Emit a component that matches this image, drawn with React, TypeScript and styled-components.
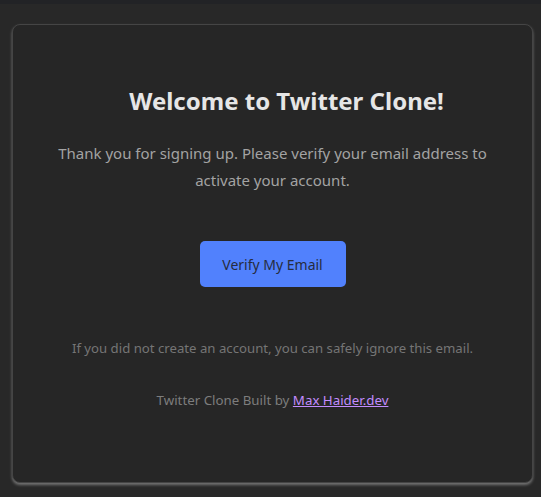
import React from "react";
import styled, { createGlobalStyle } from "styled-components";

const Global = createGlobalStyle`
  html, body { margin: 0; padding: 0; background: #282828; }
  body { font-family: "Noto Sans", "Open Sans", sans-serif; }
`;

const Page = styled.div`
  min-height: 497px;
  box-sizing: border-box;
  border-top: 4px solid #222326;
  padding: 20px 8px 14px 12px;
  background: #282828;
`;

const Card = styled.div`
  box-sizing: border-box;
  width: 521px;
  height: 459px;
  background: #262626;
  border: 1px solid #454545;
  border-radius: 8px;
  box-shadow: 0 2px 3px rgba(255, 255, 255, 0.35);
  padding: 61px 30px 0;
  display: flex;
  flex-direction: column;
  align-items: center;
  text-align: center;
`;

const Title = styled.h1`
  margin: 0 0 0 28px;
  font-size: 24px;
  line-height: 30px;
  font-weight: 700;
  color: #e6e6e6;
`;

const Lead = styled.p`
  margin: 24px 0 0;
  font-size: 15px;
  line-height: 27px;
  color: #a3a3a3;
`;

const Button = styled.a`
  margin-top: 47px;
  display: flex;
  align-items: center;
  justify-content: center;
  width: 146px;
  height: 46px;
  border-radius: 5px;
  background: #5181fd;
  color: #262c40;
  font-size: 14px;
  text-decoration: none;
`;

const Note = styled.p`
  margin: 51px 0 0;
  font-size: 13.2px;
  line-height: 20px;
  color: #757575;
`;

const Footer = styled.p`
  margin: 32px 0 0;
  font-size: 13.3px;
  line-height: 20px;
  color: #7d7d7d;
`;

const Link = styled.a`
  color: #c28cff;
  text-decoration: underline;
`;

export default function App() {
  return (
    <>
      <Global />
      <Page>
        <Card>
          <Title>Welcome to Twitter Clone!</Title>
          <Lead>
            Thank you for signing up. Please verify your email address to
            <br />
            activate your account.
          </Lead>
          <Button href="#">Verify My Email</Button>
          <Note>If you did not create an account, you can safely ignore this email.</Note>
          <Footer>
            Twitter Clone Built by <Link href="#">Max Haider.dev</Link>
          </Footer>
        </Card>
      </Page>
    </>
  );
}
